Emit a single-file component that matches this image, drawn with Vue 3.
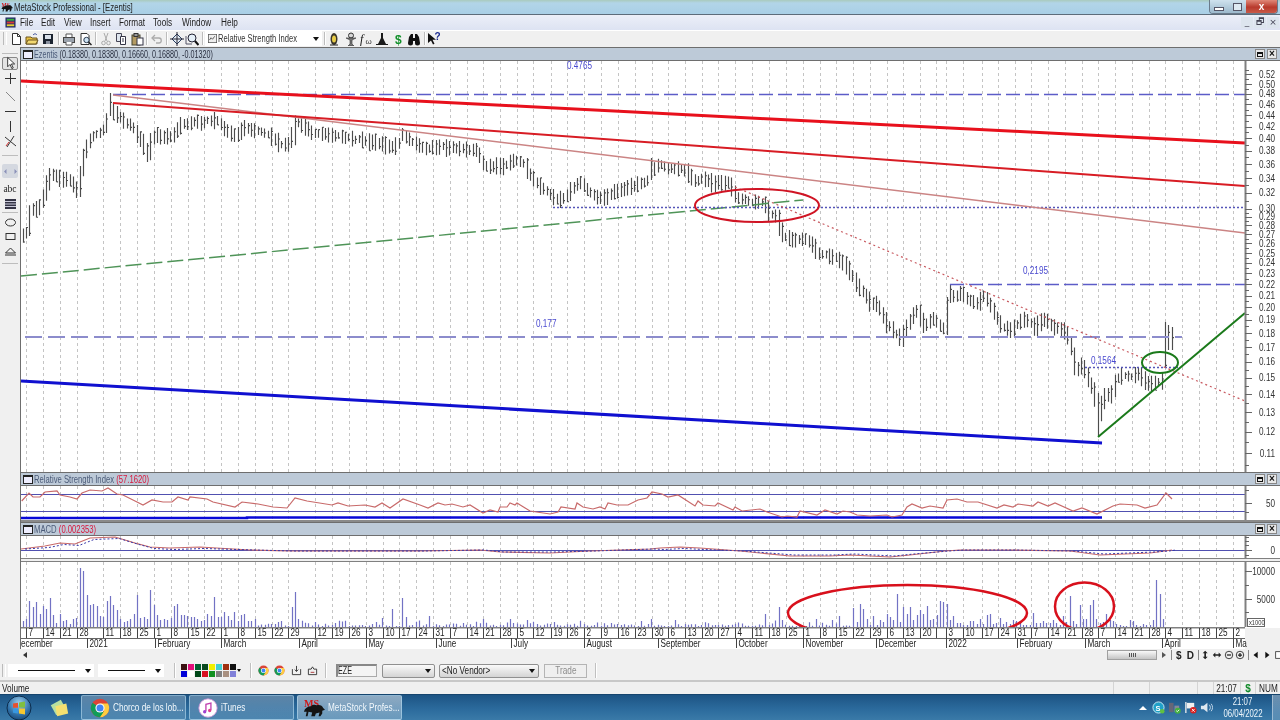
<script setup>
const rng = (() => { let s = 12345; return () => (s = (s * 16807) % 2147483647) / 2147483647 })()

const interp = (pts, x) => {
  if (x <= pts[0][0]) return pts[0][1]
  for (let i = 1; i < pts.length; i++) {
    if (x <= pts[i][0]) {
      const [a, b] = pts[i - 1], [c, d] = pts[i]
      return b + ((d - b) * (x - a)) / (c - a)
    }
  }
  return pts[pts.length - 1][1]
}
const line = pts => 'M' + pts.map(p => p[0] + ' ' + p[1]).join('L')

/* ---- weekly ticks and their labels ---- */
const weekLabels = [
  [26,7],[43,14],[60,21],[76.5,28],[103,11],[120,18],[137,25],[154,1],[171,8],[188,15],[204,22],[221,1],[238,8],[255,15],[272,22],[288,29],
  [315,12],[332,19],[349,26],[366,3],[383,10],[399,17],[416,24],[433,31],[450,7],[467,14],[483,21],[500,28],[517,5],[533,12],[551,19],[567,26],
  [584,2],[601,9],[618,16],[635,23],[652,30],[668,6],[685,13],[702,20],[718,27],[735,4],[752,11],[769,18],[786,25],[803,1],[820,8],[836,15],
  [853,22],[870,29],[887,6],[903,13],[920,20],[936,''],[946,3],[963,10],[982,17],[998,24],[1015,31],[1031,7],[1048,14],[1065,21],[1082,28],
  [1098,7],[1115,14],[1132,21],[1149,28],[1165,4],[1182,11],[1199,18],[1216,25],[1233,2]
].map(([x, t]) => ({ x: Math.round(x) + 0.5, t }))
const gridPath = top => bottom => weekLabels.map(w => `M${w.x} ${top}V${bottom}`).join('')
const months = [
  [5,'ecember',true],[87,'2021'],[154.5,'February'],[221,'March'],[299,'April'],[366,'May'],[436,'June'],[511,'July'],[584,'August'],[658,'September'],
  [736,'October'],[803,'November'],[876,'December'],[946,'2022'],[1017,'February'],[1085,'March'],[1162,'April'],[1233,'Ma']
].map(([x, t, cut]) => ({ x: Math.round(x) + 0.5, t, cut }))

/* ---- price path, traced in screen pixels ---- */
const price = [[22,238],[27,230],[30,203],[37,213],[43,193],[50,172],[58,177],[67,180],[77,193],[80,167],[88,137],[100,132],[103,128],[110,108],[117,117],[130,127],[142,145],[147,152],[152,133],[158,138],[170,137],[180,123],[200,123],[215,120],[233,137],[243,127],[267,133],[277,145],[290,145],[295,123],[313,133],[337,137],[360,140],[393,148],[403,135],[420,148],[440,147],[477,152],[483,167],[505,165],[513,159],[523,165],[533,182],[550,197],[557,202],[565,195],[578,180],[590,195],[600,198],[620,190],[640,182],[650,177],[652,165],[667,167],[683,168],[695,182],[700,178],[710,183],[727,183],[733,195],[747,202],[763,203],[768,215],[775,217],[780,235],[792,242],[803,238],[817,253],[832,258],[845,265],[853,280],[862,293],[870,305],[877,305],[885,323],[900,340],[907,323],[915,307],[922,325],[932,318],[945,332],[948,300],[952,292],[955,300],[960,293],[970,302],[978,303],[982,293],[993,313],[1000,328],[1010,330],[1022,320],[1035,328],[1042,318],[1053,328],[1065,332],[1070,347],[1075,375],[1080,362],[1087,380],[1095,400],[1098,415],[1105,393],[1110,400],[1113,378],[1127,377],[1138,375],[1147,383],[1162,382],[1166,343],[1168,337],[1172,338]]
const spikes = [[110,93,116],[147,143,162],[292,127,148],[403,128,141],[652,158,180],[947,297,335],[951,284,303],[1098,393,436],[1166,322,368],[1169,325,350],[1172,327,350]]
let prev = null
let barPath = ''
for (let x = 22.5; x <= 1172; x += 3.36) {
  const px = Math.round(x) + 0.5
  const y = interp(price, x) + (rng() - 0.5) * 4
  const r = 3 + rng() * 5
  let hi = Math.min(y, prev ?? y) - r
  let lo = Math.max(y, prev ?? y) + r
  const sp = spikes.find(s => Math.abs(s[0] - x) < 1.7)
  if (sp) { hi = sp[1]; lo = sp[2] }
  const c = hi + (lo - hi) * rng()
  barPath += `M${px} ${hi.toFixed(1)}V${lo.toFixed(1)}M${px} ${c.toFixed(1)}h1.5`
  prev = y
}

/* ---- price axis: logarithmic ---- */
const py = p => 94 + 243.8 * Math.log(0.48 / p)
const priceLabels = []
for (let i = 52; i >= 11; i -= i > 30 ? 2 : 1) priceLabels.push({ t: '0.' + i, y: py(i / 100) + 3.5 })
let priceMajor = '', priceMinor = ''
for (let i = 53; i >= 11; i--) {
  const y = Math.round(py(i / 100)) + 0.5
  if (i > 30 && i % 2) priceMinor += `M1245 ${y}h4`
  else priceMajor += `M1245 ${y}h7`
  if (i <= 30) priceMinor += `M1245 ${Math.round(py((i - 0.5) / 100)) + 0.5}h4`
}

/* ---- indicators ---- */
const rsi = line([[21.7,501],[29,493],[33,497],[40,497],[45,492],[57,491],[60,495],[70,497],[77,499],[82,493],[90,490],[102,491],[108,488],[117,494],[123,495],[137,502],[143,505],[152,500],[163,502],[172,502],[178,497],[188,500],[190,497],[207,499],[213,502],[235,507],[242,502],[258,504],[273,507],[287,508],[295,498],[307,501],[332,505],[338,503],[348,506],[365,505],[375,507],[382,503],[390,508],[403,499],[420,505],[428,508],[438,503],[445,505],[452,504],[463,507],[470,505],[483,513],[490,510],[498,512],[500,507],[507,507],[510,503],[515,505],[517,503],[530,511],[550,514],[558,512],[561,507],[575,509],[577,503],[583,507],[593,509],[600,507],[605,509],[608,503],[617,505],[628,505],[638,500],[647,498],[652,492],[662,494],[668,497],[678,495],[695,506],[698,501],[703,505],[715,506],[718,503],[733,510],[735,507],[742,511],[760,509],[767,512],[782,517],[787,516],[797,517],[800,511],[817,515],[825,510],[837,514],[843,511],[850,512],[857,515],[870,516],[887,515],[892,517],[902,515],[907,507],[912,504],[922,508],[930,506],[943,508],[947,500],[957,499],[967,502],[978,502],[997,508],[1004,505],[1013,507],[1018,504],[1033,506],[1038,502],[1048,506],[1055,503],[1073,511],[1082,508],[1097,514],[1113,506],[1120,504],[1137,505],[1145,508],[1157,505],[1166,493],[1172,499]])
const macdPts = [[21,549],[45,546],[60,543],[75,544],[90,538],[115,537],[135,543],[150,547],[170,548],[200,547],[250,550],[290,551],[330,551],[420,551],[480,550],[500,552],[550,553],[590,551],[650,549],[660,548],[680,547],[700,548],[740,551],[790,556],[830,556],[850,555],[890,557],[910,555],[945,551],[960,550],[1010,550],[1070,551],[1100,555],[1125,554],[1150,553],[1165,551],[1172,550]]
const macd = line(macdPts)
const macdSig = line(macdPts.map(([x, y]) => [x + 4, y + (y < 549 ? 1.5 : y > 552 ? -1 : 0)]))

/* ---- volume ---- */
const volA = [6,8,26,20,25,13,21,18,29,12,4,13,6,7,3,8,9,59,56,32,22,23,21,11,10,26,31,22,17,8,5,6,8,13,32,9,10,8,37,22,12,7,8,7,9,21,23,12,12,11,10,10,8,6,7,13,11,30,10,10,15,11,7,15,6,12,13,6,6,8]
const volBy = [19,5,23,18,8,2,11,2,7,5,13,10,7,33,5,20,13,20,7,12,17,13,21,7,8,12,26,25,23,7,11,4,4,2,2,6,6,3,8,3,12,13,3,4,9,3,5,3,7,6,6,2,2,2,14,4,4,6,4,4,7,4,2,11,5,31,6,3,22,8,8,22,27,8,4,5,13,7,6,3,2,1,1,7,6,2,1,3,2,2,7,47,33,8]
const volMid = { 292: 20, 295: 35, 298: 8, 382: 9, 393: 18, 403: 29, 406: 10, 429: 11, 483: 8, 510: 8, 527: 7, 652: 8, 675: 7, 766: 13, 779: 20, 783: 7, 817: 8, 840: 11, 833: 7 }
let volPath = ''
volA.forEach((h, i) => { const x = Math.round(22.7 + i * 3.36) + 0.5; volPath += `M${x} 627v${-h}` })
for (let x = 22.7 + 70 * 3.36; x < 853; x += 3.36) {
  const k = Math.round(x)
  const hit = Object.keys(volMid).find(m => Math.abs(m - k) < 2)
  const h = hit ? volMid[hit] : 1 + rng() * rng() * 6
  volPath += `M${k + 0.5} 627v${(-h).toFixed(1)}`
}
volBy.forEach((h, i) => { const x = Math.round(853.3 + i * 3.33) + 0.5; volPath += `M${x} 627v${-h}` })

/* ---- toolbars ---- */
const page = 'fill="#fff" stroke="#333"'
const mainTools = [
  { w: 16, svg: `<path d="M3.5 1.5h5l3 3v8h-8z" ${page}/><path d="M8.5 1.5v3h3" fill="none" stroke="#333"/>` },
  { w: 16, svg: `<path d="M1 5h5l1 1h5v6H1z" fill="#e8c040" stroke="#6a5420"/><path d="M3 8h10l-2 4H1z" fill="#f2d870" stroke="#6a5420"/><path d="M8 3c2-2 3-1 4 0" fill="none" stroke="#2a3f90"/>` },
  { w: 16, svg: `<rect x="2" y="2" width="10" height="10" fill="#1c2430"/><rect x="4" y="3" width="6" height="4" fill="#d8dfe8"/><rect x="5" y="9" width="4" height="3" fill="#8a92a0"/>` },
  { sep: 1 },
  { w: 15, svg: `<path d="M4 5V2h6v3" fill="#fff" stroke="#555"/><rect x="1.5" y="5.5" width="11" height="5" fill="#9aa2ac" stroke="#444"/><path d="M4 10v3h6v-3" fill="#fff" stroke="#555"/>` },
  { w: 17, svg: `<path d="M3 1.5h6l2 2v9H3z" ${page}/><circle cx="8.5" cy="8" r="2.7" fill="#cfe4f4" stroke="#2a3a50"/><path d="M10.5 10l3 3" stroke="#222" stroke-width="1.5"/>` },
  { sep: 1 },
  { w: 15, svg: `<path d="M5 1l3 8M9 1L6 9" stroke="#aaa" fill="none"/><circle cx="4.5" cy="11" r="1.8" fill="none" stroke="#aaa"/><circle cx="9.5" cy="11" r="1.8" fill="none" stroke="#aaa"/>` },
  { w: 16, svg: `<path d="M2.5 1.5h5v8h-5z" fill="#dfe6ee" stroke="#445"/><path d="M6.5 4.5h5v8h-5z" fill="#fff" stroke="#334"/><path d="M8 7h2M8 9h2" stroke="#334"/>` },
  { w: 15, svg: `<rect x="2" y="3" width="8" height="10" fill="#b39a62" stroke="#443"/><rect x="4" y="1.5" width="4" height="3" fill="#999" stroke="#333"/><rect x="7" y="6" width="6" height="7" fill="#fff" stroke="#334"/>` },
  { sep: 1 },
  { w: 15, svg: `<path d="M3 6h6c3 0 3 5 0 5H6" fill="none" stroke="#aaa" stroke-width="1.3"/><path d="M5 3L2 6l3 3" fill="none" stroke="#aaa" stroke-width="1.3"/>` },
  { sep: 1 },
  { w: 15, svg: `<path d="M7 2l5 5-5 5-5-5z" fill="#e6eef6" stroke="#2a3f60"/><path d="M7 0v14M0 7h14" stroke="#223" stroke-width="1"/>` },
  { w: 16, svg: `<path d="M1 12V4M1 12h6" stroke="#556" fill="none"/><circle cx="7" cy="6" r="4" fill="#e6f0f8" stroke="#223"/><path d="M10 9l3.5 4" stroke="#111" stroke-width="2"/>` },
  { sep: 1 },
  { combo: 1 },
  { sep: 1 },
  { w: 14, svg: `<ellipse cx="7" cy="7" rx="3.5" ry="6" fill="#39342a"/><ellipse cx="7" cy="7" rx="2" ry="3.6" fill="#e8cc48"/><path d="M3 13h8" stroke="#222"/>` },
  { w: 17, svg: `<circle cx="8" cy="3.5" r="2.5" fill="#d8d8d8" stroke="#333"/><path d="M3 6h10L9 8v4l2 2H5l2-2V8z" fill="#777" stroke="#333" stroke-width=".6"/>` },
  { w: 16, svg: `<text x="1" y="11" class="fx">f</text><text x="6.5" y="12" class="fxs">ω</text>` },
  { w: 16, svg: `<path d="M6 1h2v5l3 6h2v1H1v-1h2l3-6z" fill="#1a1a1a"/>` },
  { w: 16, svg: `<text x="4" y="12" class="dollar">$</text>` },
  { w: 16, svg: `<path d="M2 5l2-3h2v4h2V2h2l2 3 1 6a2.5 2.5 0 0 1-5 0V9H6v2a2.5 2.5 0 0 1-5 0z" fill="#111"/>` },
  { sep: 1 },
  { w: 14, svg: `<path d="M1 1v10l3-2.5 2 4 1.5-.7-2-4H9z" fill="#111"/><text x="7.5" y="8" class="qm">?</text>` }
]
const toolbox = [
  { sep: 8 },
  { h: 13, cls: 'pressed', svg: `<path d="M5 1v10l2.5-2.5L9.5 13l1.5-.7-2-4.3h3.5z" fill="#fff" stroke="#333"/>` },
  { h: 17, svg: `<path d="M7.5 2v11M2 7.5h11" stroke="#333" fill="none"/>` },
  { h: 19, svg: `<path d="M3 3l9 9" stroke="#888" fill="none"/>` },
  { h: 10, svg: `<path d="M2 7.5h11" stroke="#333" fill="none"/>` },
  { h: 20, svg: `<path d="M7.5 2v11" stroke="#333" fill="none"/>` },
  { h: 10, svg: `<path d="M2 3l11 9M11 2L4 13" stroke="#333" fill="none"/><path d="M3 12l3-4" stroke="#c33"/>` },
  { sep: 18 },
  { h: 14, cls: 'pair', svg: `<path d="M3.5 5v5L1 7.5zM11.5 5v5L14 7.5z" fill="#8a90b8"/>` },
  { h: 2 },
  { h: 18, txt: 'abc' },
  { h: 10, svg: `<rect x="2" y="3" width="11" height="10" fill="#334"/><path d="M2 5.5h11M2 8h11M2 10.500h11" stroke="#ccd"/>` },
  { sep: 8 },
  { h: 12, svg: `<ellipse cx="7.5" cy="7.500" rx="5" ry="3.5" fill="none" stroke="#333"/>` },
  { h: 16, svg: `<rect x="3" y="4.500" width="9" height="6" fill="none" stroke="#333"/>` },
  { h: 14, svg: `<path d="M7.500 4l5 5h-10z" fill="none" stroke="#333"/><path d="M2 11h11" stroke="#333"/>` },
  { sep: 10 }
]
const palette = ['#3a1010','#e0107a','#006030','#0a4a20','#f0f000','#40d0d0','#a03010','#101010','#0000d8','#ffffff','#004818','#d81020','#109020','#808080','#a89080','#8080d8']
const endTools = [
  { sep: 1 }, { t: '$', c: 'bold' }, { t: 'D', c: 'bold' }, { sep: 1 },
  { svg: `<path d="M5 1l3 3H2zM5 11l3-3H2z M4 4h2v4H4z" fill="#222"/>` },
  { svg: `<path d="M1 5l3-3v6zM11 5L8 2v6zM4 4h4v2H4z" fill="#222" transform="translate(0 1)"/>` },
  { svg: `<circle cx="6" cy="6" r="4.500" fill="none" stroke="#222"/><path d="M3.500 6h5" stroke="#222" stroke-width="1.500"/>` },
  { svg: `<circle cx="6" cy="6" r="4.500" fill="none" stroke="#222"/><path d="M3.500 6h5M6 3.500v5" stroke="#222" stroke-width="1.500"/>` },
  { sep: 1 },
  { svg: `<path d="M3 6l5-4v8z" fill="#111"/>` },
  { svg: `<path d="M9 6L4 2v8z" fill="#111"/>` },
  { svg: `<rect x="2" y="2" width="8" height="8" fill="#fff" stroke="#333"/>` }
]
</script>

<template>
  <div class="app">
    <header class="title">
      <svg class="msmini" viewBox="0 0 24 24"><use href="#ms-logo" /></svg>
      <span class="title-text nw">MetaStock Professional - [Ezentis]</span>
      <div class="caption">
        <span class="cap cap-min"><i class="cap-dash"></i></span>
        <span class="cap cap-max"><i class="cap-box"></i></span>
        <span class="cap cap-close">x</span>
      </div>
    </header>

    <nav class="menu">
      <svg class="appicon" viewBox="0 0 12 12">
        <rect x="0.500" y="0.500" width="11" height="11" fill="#26306a" />
        <rect x="2" y="2" width="8" height="2" fill="#38b040" />
        <rect x="2" y="5" width="8" height="2" fill="#d83838" />
        <rect x="2" y="8" width="8" height="2" fill="#e8d030" />
      </svg>
      <span class="mi nw">File</span><span class="mi nw">Edit</span><span class="mi nw">View</span><span class="mi nw">Insert</span><span class="mi nw">Format</span><span class="mi nw">Tools</span><span class="mi nw">Window</span><span class="mi nw">Help</span>
      <div class="mdi">
        <span class="mdi-b">_</span><span class="mdi-b">🗗</span><span class="mdi-b">×</span>
      </div>
    </nav>

    <section class="tools">
      <span class="grip"></span>
      <template v-for="(t, i) in mainTools" :key="i">
        <span v-if="t.sep" class="tsep"></span>
        <span v-else-if="t.combo" class="study">
          <svg class="study-ic" viewBox="0 0 12 12"><rect x="0.500" y="0.500" width="11" height="11" fill="#eee" stroke="#555"/><path d="M2 8l2-3 2 2 3-4" fill="none" stroke="#333"/></svg>
          <span class="study-t nw">Relative Strength Index</span>
          <i class="arrow"></i>
        </span>
        <span v-else class="titem" :style="{ width: t.w + 'px' }"><svg viewBox="0 0 14 14" width="14" height="14" v-html="t.svg"></svg></span>
      </template>
    </section>

    <main class="work">
      <aside class="box">
        <template v-for="(b, i) in toolbox" :key="i">
          <span v-if="b.sep" class="bsep" :style="{ height: b.sep + 'px' }"></span>
          <span v-else class="bitem" :class="b.cls" :style="{ height: b.h + 'px' }">
            <span v-if="b.txt" class="abc">{{ b.txt }}</span>
            <svg v-else-if="b.svg" viewBox="0 0 15 15" width="15" height="15" v-html="b.svg"></svg>
          </span>
        </template>
      </aside>

      <div class="chartcol">
        <div class="panes">
          <div class="ptitle">
            <i class="win-ic"></i>
            <span class="nw pt-main"><span class="pname">Ezentis </span><span class="pvals">(0.18380, 0.18380, 0.16660, 0.16880, -0.01320)</span></span>
            <span class="pbtns"><i class="pb"><i class="pb-box"></i></i><i class="pb pb-x">×</i></span>
          </div>

          <svg class="pane pane-main" viewBox="21 61 1259 411">
            <path :d="gridPath(61)(472)" class="grid" />
            <path :d="barPath" class="bars" />
            <path d="M21 276L803 200" class="l-greendash" />
            <path d="M553 207.500H1245" class="l-dots" />
            <path d="M1085 367.500H1178" class="l-dots" />
            <path d="M25 337H1182" class="l-dashlight" />
            <path d="M113 94.500H1245" class="l-dash" />
            <path d="M950 284.500H1245" class="l-dash" />
            <path d="M113 95L1245 233" class="l-thin" />
            <path d="M113 103L1245 186" class="l-mid" />
            <path d="M21 81L1245 143" class="l-thick" />
            <path d="M735 187L1245 401" class="l-reddots" />
            <path d="M21 381L1102 443" class="l-blue" />
            <path d="M1098 437L1245 313" class="l-green" />
            <ellipse cx="757" cy="205.500" rx="62" ry="16.500" class="o-red" />
            <ellipse cx="1160" cy="362.500" rx="18" ry="10.500" class="o-green" />
            <text x="567" y="69" class="note">0.4765</text>
            <text x="1023" y="274" class="note">0,2195</text>
            <text x="536" y="327" class="note">0,177</text>
            <text x="1091" y="364" class="note">0,1564</text>
            <rect x="1246" y="61" width="34" height="411" fill="#fff" />
            <path d="M1245.500 61V472" class="axis" />
            <path :d="priceMajor" class="axtick" />
            <path :d="priceMinor" class="axtick" />
            <text v-for="l in priceLabels" :key="l.t" x="1275" :y="l.y" class="ylab">{{ l.t }}</text>
          </svg>

          <div class="ptitle">
            <i class="win-ic"></i>
            <span class="nw pt"><span class="pname">Relative Strength Index </span><span class="pred">(57.1620)</span></span>
            <span class="pbtns"><i class="pb"><i class="pb-box"></i></i><i class="pb pb-x">×</i></span>
          </div>
          <svg class="pane pane-rsi" viewBox="21 486 1259 34">
            <path :d="gridPath(486)(520)" class="grid" />
            <path d="M21 494.500H1245M21 511.500H1245" class="ref" />
            <path d="M21 518H247V517.500H1102" class="rsiblue" />
            <path :d="rsi" class="ind" />
            <rect x="1246" y="486" width="34" height="34" fill="#fff" />
            <path d="M1245.500 486V520" class="axis" />
            <path d="M1245 490.500h4M1245 503.500h7M1245 512.500h4" class="axtick" />
            <text x="1275" y="507" class="ylab">50</text>
          </svg>
          <div class="psep"></div>

          <div class="ptitle">
            <i class="win-ic"></i>
            <span class="nw pt"><span class="pname">MACD </span><span class="pred">(0.002353)</span></span>
            <span class="pbtns"><i class="pb"><i class="pb-box"></i></i><i class="pb pb-x">×</i></span>
          </div>
          <svg class="pane pane-macd" viewBox="21 536 1259 22">
            <path :d="gridPath(536)(558)" class="grid" />
            <path d="M21 550.500H1245" class="ref" />
            <path :d="macd" class="ind" />
            <path :d="macdSig" class="sig" />
            <rect x="1246" y="536" width="34" height="22" fill="#fff" />
            <path d="M1245.500 536V558" class="axis" />
            <path d="M1245 537.500h4M1245 541.500h4M1245 545.500h4M1245 550.500h7M1245 555.500h4" class="axtick" />
            <text x="1275" y="554.500" class="ylab">0</text>
          </svg>
          <div class="pgap"></div>

          <svg class="pane pane-vol" viewBox="21 562 1259 65">
            <path :d="gridPath(562)(627)" class="grid" />
            <path :d="volPath" class="vol" />
            <ellipse cx="907.500" cy="613" rx="119.500" ry="28" class="o-vol" />
            <ellipse cx="1084.500" cy="606.500" rx="29.500" ry="24" class="o-vol" />
            <rect x="1246" y="562" width="34" height="65" fill="#fff" />
            <path d="M1245.500 562V627" class="axis" />
            <path d="M1245 571.500h7M1245 599.500h7M1245 585.500h4M1245 612.500h4" class="axtick" />
            <text x="1275" y="575.500" class="ylab">10000</text>
            <text x="1275" y="603" class="ylab">5000</text>
            <rect x="1247.500" y="618.500" width="17" height="8" class="kbox" />
            <text x="1249" y="625" class="ktext">x1000</text>
          </svg>

          <svg class="pane pane-dates" viewBox="21 627 1259 22">
            <rect x="21" y="627" width="1224" height="22" fill="#fff" />
            <rect x="1245" y="628" width="35" height="21" fill="#f0f0f0" />
            <path d="M21 627.500H1245" class="dateline" />
            <path d="M21 638.500H1245" class="dateline2" />
            <path :d="weekLabels.map(w => `M${w.x} 628V638`).join('')" class="dticks" />
            <path :d="months.filter(m => !m.cut).map(m => `M${m.x} 638V648`).join('')" class="dticks" />
            <template v-for="w in weekLabels" :key="w.x">
              <text v-if="w.t !== ''" :x="w.x + 2" y="636" class="dtext">{{ w.t }}</text>
            </template>
            <text v-for="m in months" :key="m.t + m.x" :x="m.cut ? 21 : m.x + 2" y="647" class="dtext">{{ m.t }}</text>
          </svg>
        </div>

        <div class="scroll">
          <span class="sl"></span>
          <span class="thumb"><i class="thumb-g"></i></span>
          <span class="sr"></span>
          <template v-for="(e, i) in endTools" :key="i">
            <span v-if="e.sep" class="esep"></span>
            <span v-else-if="e.t" class="eitem etxt">{{ e.t }}</span>
            <span v-else class="eitem"><svg viewBox="0 0 12 12" width="10" height="10" v-html="e.svg"></svg></span>
          </template>
        </div>
      </div>
    </main>

    <section class="bottom">
      <span class="grip small"></span>
      <span class="lc lc1"><i class="lcline"></i><i class="arrow"></i></span>
      <span class="lc lc2"><i class="lcline"></i><i class="arrow"></i></span>
      <span class="bsepv"></span>
      <span class="colors"><i v-for="(c, i) in palette" :key="i" class="sw" :style="{ background: c }"></i></span>
      <i class="arrow tiny"></i>
      <span class="bsepv b2"></span>
      <svg class="chr c1" viewBox="0 0 24 24"><use href="#chrome" /></svg>
      <svg class="chr c2" viewBox="0 0 24 24"><use href="#chrome" /></svg>
      <svg class="doc d1" viewBox="0 0 12 12"><path d="M1.500 4.500v6h9v-6M6 1v6M4 5l2 2 2-2" fill="none" stroke="#333"/></svg>
      <svg class="doc d2" viewBox="0 0 12 12"><path d="M1.500 4.500v6h9v-6h-3L6 2 4.500 4.500z" fill="none" stroke="#333"/><path d="M4 8h4" stroke="#a33"/></svg>
      <span class="bsepv b3"></span>
      <span class="eze"><span class="nw eze-t">EZE</span></span>
      <span class="dd dd1"><i class="arrow"></i></span>
      <span class="dd dd2"><span class="nw dd-t">&lt;No Vendor&gt;</span><i class="arrow"></i></span>
      <span class="trade"><span class="nw trade-t">Trade</span></span>
      <span class="bsepv b4"></span>
    </section>

    <footer class="status">
      <span class="st-main"><span class="nw">Volume</span></span>
      <span class="st-cell c-a"></span>
      <span class="st-cell c-a2"></span>
      <span class="st-cell c-a3"></span>
      <span class="st-cell c-b"><span class="nw ctr">21:07</span></span>
      <span class="st-cell c-c">$</span>
      <span class="st-cell c-d"><span class="nw ctr">NUM</span></span>
    </footer>

    <div class="taskbar">
      <svg class="orb" viewBox="0 0 26 26">
        <defs>
          <radialGradient id="orbg" cx=".5" cy=".3" r=".8"><stop offset="0" stop-color="#9fd0ee"/><stop offset=".6" stop-color="#2f70a8"/><stop offset="1" stop-color="#153d66"/></radialGradient>
        </defs>
        <circle cx="13" cy="13" r="12" fill="url(#orbg)" stroke="#0c2c4c"/>
        <path d="M7 8.500l5-.8v5H7z" fill="#e85030"/><path d="M13 7.500l6-1v6h-6z" fill="#80c040"/>
        <path d="M7 13.500h5v5l-5-.8z" fill="#3898e0"/><path d="M13 13.500h6v6l-6-1z" fill="#f8c830"/>
      </svg>
      <svg class="gadget" viewBox="0 0 24 24">
        <path d="M3 9l11-6 6 11-11 6z" fill="#b8e0a0"/><path d="M8 10l12-3 2 11-12 3z" fill="#f4e070"/>
      </svg>
      <span class="tb">
        <svg class="tb-ic" viewBox="0 0 24 24"><use href="#chrome" /></svg>
        <span class="tb-t nw">Chorco de los lob...</span>
      </span>
      <span class="tb tb2">
        <svg class="tb-ic" viewBox="0 0 24 24">
          <circle cx="12" cy="12" r="11" fill="#fff" stroke="#d090d8"/>
          <path d="M9.500 16V7.500l6-1.500v8.500" fill="none" stroke="#c040b0" stroke-width="1.600"/>
          <circle cx="8" cy="16.500" r="2" fill="#a040d0"/><circle cx="14" cy="15" r="2" fill="#e04090"/>
        </svg>
        <span class="tb-t nw">iTunes</span>
      </span>
      <span class="tb tb3">
        <svg class="tb-ms" viewBox="0 0 24 24"><use href="#ms-logo" /></svg>
        <span class="tb-t nw">MetaStock Profes...</span>
      </span>
      <div class="tray">
        <svg class="tr-ic up" viewBox="0 0 8 8"><path d="M0 6l4-4 4 4z" fill="#fff"/></svg>
        <svg class="tr-ic" viewBox="0 0 14 14"><circle cx="7" cy="7" r="6" fill="#20a0c8" stroke="#cfeff8"/><text x="3.800" y="10.500" class="tray-s">S</text><circle cx="11" cy="11" r="2.500" fill="#60c040"/></svg>
        <svg class="tr-ic" viewBox="0 0 14 14"><rect x="1" y="2" width="5" height="10" fill="#667"/><rect x="7" y="5" width="5" height="7" fill="#889"/><circle cx="10.500" cy="10.500" r="3.200" fill="#44b040"/><path d="M9 10.500l1 1 2-2" stroke="#fff" fill="none"/></svg>
        <svg class="tr-ic" viewBox="0 0 14 14"><path d="M2 1v12" stroke="#eee" stroke-width="1.400"/><path d="M3 2h8v6H3z" fill="#f0f0f0"/><circle cx="10" cy="10" r="3.500" fill="#d82020"/><path d="M8.500 8.500l3 3M11.500 8.500l-3 3" stroke="#fff"/></svg>
        <svg class="tr-ic" viewBox="0 0 14 14"><path d="M1 5h3l4-3v10l-4-3H1z" fill="#dfe8f0"/><path d="M10 4c1.500 2 1.500 4 0 6M12 3c2 2.500 2 5.500 0 8" fill="none" stroke="#cde"/></svg>
        <span class="clock"><span class="clock-t">21:07</span><span class="clock-t">06/04/2022</span></span>
        <span class="desk"></span>
      </div>
    </div>

    <svg class="defs" width="0" height="0">
      <defs>
        <g id="chrome">
          <circle cx="12" cy="12" r="11" fill="#db4437"/>
          <path d="M12 12L2.500 17.500A11 11 0 0 1 3 5.800z" fill="#0f9d58"/>
          <path d="M2.500 17.500A11 11 0 0 0 12 23l5-5.500L12 12z" fill="#0f9d58"/>
          <path d="M12 23A11 11 0 0 0 23 12c0-2-.5-3.500-1.500-5.500H12l5 9z" fill="#ffcd40"/>
          <circle cx="12" cy="12" r="5.500" fill="#fff"/>
          <circle cx="12" cy="12" r="4.200" fill="#4285f4"/>
        </g>
        <g id="ms-logo">
          <text x="1" y="11" class="mstext">MS</text>
          <path d="M1 16c1-4 4-6 8-6 1-2 4-2 6-1 3-1 6 0 7 3l2 2-3 1v3l-2 3h-2l1-4-4 1-1 3H9l1-4-4-1-1 5H3l1-5z" fill="#141414"/>
        </g>
      </defs>
    </svg>
  </div>
</template>

<style>
html, body { margin: 0; background: #f0f0f0; }
.fx { font: italic 12px "Liberation Serif", serif; fill: #111; }
.fxs { font: 8px "Liberation Sans", sans-serif; fill: #333; }
.dollar { font: bold 12px "Liberation Sans", sans-serif; fill: #12902a; }
.qm { font: bold 10px "Liberation Sans", sans-serif; fill: #1a2a90; }
.mstext { font: bold 11px "Liberation Serif", serif; fill: #d01818; }
.tray-s { font: bold 8px "Liberation Sans", sans-serif; fill: #fff; }
</style>

<style scoped>
.app {
  width: 1280px; height: 720px; overflow: hidden; position: relative;
  display: flex; flex-direction: column; background: #f0f0f0;
  font: 10px "Liberation Sans", Arial, sans-serif; color: #222;
  filter: blur(0.3px);
}
i { display: block; font-style: normal; }
/* the screen this was captured from was squeezed horizontally, so its type reads condensed */
.nw { display: inline-block; white-space: pre; transform: scaleX(.82); transform-origin: left center; }
.nw.ctr { transform-origin: center; }
.nw.pt-main { transform: scaleX(.72); }
.nw.pt { transform: scaleX(.77); }

.title {
  height: 14px; flex: none; display: flex; align-items: center; box-sizing: content-box;
  background: linear-gradient(#a9cabd 0, #b2d5e8 3px, #a9cfe6 100%); border-bottom: 1px solid #5d6c7a;
}
.msmini { width: 12px; height: 12px; margin-left: 1px; flex: none; }
.nw.title-text { margin-left: 1px; font-size: 10px; color: #222; transform: scaleX(.78); }
.caption { margin-left: auto; margin-right: 2px; height: 13px; align-self: flex-start; display: flex; border: 1px solid #6a7a8a; border-top: 0; border-radius: 0 0 4px 4px; overflow: hidden; }
.cap { display: flex; align-items: center; justify-content: center; width: 18px; background: linear-gradient(#cfe2ee, #9cb9cc); }
.cap-close { width: 31px; background: linear-gradient(#e08878, #b83a2c 55%, #c85a48); color: #fff; font: bold 10px "Liberation Sans", sans-serif; }
.cap-dash { width: 8px; height: 2px; background: #fff; border: 1px solid #556; margin-top: 4px; }
.cap-box { width: 7px; height: 6px; border: 1px solid #556; background: #dfeaf2; }

.menu {
  height: 15px; flex: none; display: flex; align-items: center; position: relative;
  background: linear-gradient(#eceff8, #dde3f2);
}
.appicon { width: 11px; height: 11px; margin-left: 5px; margin-right: 4px; flex: none; }
.mi { font-size: 10px; color: #222; flex: none; }
.mi:nth-of-type(1) { width: 21px; }
.mi:nth-of-type(2) { width: 23px; }
.mi:nth-of-type(3) { width: 26px; }
.mi:nth-of-type(4) { width: 29px; }
.mi:nth-of-type(5) { width: 34px; }
.mi:nth-of-type(6) { width: 29px; }
.mi:nth-of-type(7) { width: 39px; }
.mdi { margin-left: auto; display: flex; margin-right: 1px; }
.mdi-b { width: 12px; height: 11px; margin-left: 1px; background: #dde5ee; border: 0; color: #445; font: 9px/11px "DejaVu Sans", sans-serif; text-align: center; }

.tools {
  height: 17px; flex: none; display: flex; align-items: center; background: #f0f0f0; box-sizing: border-box; border-top: 1px solid #fff; padding-bottom: 1px;
}
.grip { width: 2px; height: 13px; margin-left: 3px; margin-right: 1px; border-left: 1px solid #bbb; border-right: 1px solid #fff; box-sizing: content-box; }
.grip.small { margin-left: 3px; margin-right: 3px; }
.titem { display: flex; justify-content: center; align-items: center; flex: none; }
.tsep { width: 1px; height: 13px; background: #bcbcbc; margin: 0 1.500px; flex: none; border-right: 1px solid #fff; }
.study { width: 117px; height: 15px; background: #fff; display: flex; align-items: center; flex: none; }
.study-ic { width: 9px; height: 9px; margin-left: 3px; flex: none; }
.nw.study-t { margin-left: 1px; width: 90px; color: #333; font-size: 10px; flex: none; transform: scaleX(.76); }
.arrow { width: 0; height: 0; margin-left: auto; margin-right: 3px; border: 3px solid transparent; border-top: 4px solid #111; border-bottom: 0; flex: none; }

.work { height: 614px; flex: none; display: flex; background: #f0f0f0; }
.box { width: 20px; flex: none; display: flex; flex-direction: column; padding-top: 2px; box-sizing: border-box; }
.bitem { display: flex; align-items: center; justify-content: center; margin: 0 2px; flex: none; }
.pressed { border: 1px solid #888; border-radius: 2px; background: #e4e4e4; box-sizing: border-box; }
.pair { background: #d4d8e0; border-radius: 2px; }
.bsep { display: flex; flex: none; align-items: center; position: relative; }
.bsep::after { content: ""; width: 16px; margin-left: 2px; height: 1px; background: #bdbdbd; }
.abc { font: 9.500px "Liberation Serif", serif; color: #222; }

.chartcol { flex: 1; min-width: 0; display: flex; flex-direction: column; }
.panes { border-left: 1px solid #6e6e6e; margin-left: 0; height: 602px; box-sizing: border-box; display: flex; flex-direction: column; }
.ptitle {
  height: 14px; flex: none; box-sizing: border-box; display: flex; align-items: center;
  background: #bdcad8; border-top: 1px solid #6e6e6e; border-bottom: 1px solid #6e6e6e;
}
.win-ic { width: 8px; height: 6px; margin-left: 2px; margin-right: 1px; border: 1px solid #222; border-top-width: 2px; background: #eef; box-sizing: content-box; flex: none; }
.pname { color: #4a5a78; }
.pvals { color: #2a3040; }
.pred { color: #d8143a; }
.pbtns { margin-left: auto; margin-right: 3px; display: flex; gap: 2px; }
.pb { width: 10px; height: 10px; box-sizing: border-box; background: #e8e8e8; border: 1px solid #888; display: flex; align-items: center; justify-content: center; font: bold 10px/8px "Liberation Sans", sans-serif; color: #111; }
.pb-box { width: 6px; height: 5px; border: 1px solid #111; border-top-width: 2px; box-sizing: border-box; }

.pane { display: block; background: #fff; flex: none; width: 1259px; }
.pane-main { height: 411px; }
.pane-rsi { height: 34px; }
.pane-macd { height: 22px; }
.pane-vol { height: 65px; }
.pane-dates { height: 22px; }
.psep { height: 2px; flex: none; background: #8a8a8a; }
.pgap { height: 4px; flex: none; box-sizing: border-box; background: #f0f0f0; border-top: 1px solid #808080; border-bottom: 1px solid #808080; }

.grid { stroke: #c4c4c4; stroke-width: 1; stroke-dasharray: 3 3; fill: none; }
.bars { stroke: #4c4c4c; stroke-width: 1.150; fill: none; }
.axis { stroke: #808080; stroke-width: 2; fill: none; }
.axtick { stroke: #666; stroke-width: 1; fill: none; }
.ylab { font-size: 10px; fill: #333; text-anchor: end; transform-box: fill-box; transform-origin: right center; transform: scaleX(.82); }
.note { font-size: 10px; fill: #4a4ad0; transform-box: fill-box; transform-origin: left center; transform: scaleX(.82); }
.l-thick { stroke: #e8101c; stroke-width: 3; fill: none; }
.l-mid { stroke: #d81c24; stroke-width: 2; fill: none; }
.l-thin { stroke: #cb8484; stroke-width: 1.500; fill: none; }
.l-dash { stroke: #5c5cc8; stroke-width: 1.500; stroke-dasharray: 14 5; fill: none; }
.l-dashlight { stroke: #8c8ccc; stroke-width: 2; stroke-dasharray: 17 6; fill: none; }
.l-greendash { stroke: #4f9458; stroke-width: 1.500; stroke-dasharray: 16 5; fill: none; }
.l-dots { stroke: #5555b8; stroke-width: 1.500; stroke-dasharray: 2 2; fill: none; }
.l-reddots { stroke: #c85a60; stroke-width: 1.200; stroke-dasharray: 2 3; fill: none; }
.l-blue { stroke: #1010d0; stroke-width: 3; fill: none; }
.l-green { stroke: #1b7a1b; stroke-width: 2; fill: none; }
.o-red { stroke: #d01424; stroke-width: 2; fill: none; }
.o-green { stroke: #1b7a1b; stroke-width: 2; fill: none; }
.o-vol { stroke: #d8101c; stroke-width: 2.500; fill: none; }
.ref { stroke: #5050b0; stroke-width: 1; fill: none; }
.rsiblue { stroke: #0808d8; stroke-width: 2.500; fill: none; }
.ind { stroke: #c86a6a; stroke-width: 1.200; fill: none; }
.sig { stroke: #3838a8; stroke-width: 1; stroke-dasharray: 2 2; fill: none; }
.vol { stroke: #7272c4; stroke-width: 1.200; fill: none; }
.kbox { fill: #fff; stroke: #666; stroke-width: 1; }
.ktext { font-size: 7px; fill: #333; transform-box: fill-box; transform-origin: left center; transform: scaleX(.82); }
.dateline { stroke: #808080; stroke-width: 2; fill: none; }
.dateline2 { stroke: #666; stroke-width: 1; fill: none; }
.dticks { stroke: #444; stroke-width: 1; fill: none; }
.dtext { font-size: 10px; fill: #222; transform-box: fill-box; transform-origin: left center; transform: scaleX(.82); }

.scroll { height: 12px; flex: none; display: flex; align-items: center; padding-left: 1px; }
.sl { width: 0; height: 0; margin-left: 2px; border: 3px solid transparent; border-right: 4px solid #333; border-left: 0; }
.thumb { width: 50px; height: 10px; margin-left: 1080px; background: linear-gradient(#f8f8f8, #c4c4c4); border: 1px solid #a0a0a0; box-sizing: border-box; display: flex; align-items: center; justify-content: center; flex: none; }
.thumb-g { width: 7px; height: 4px; background: repeating-linear-gradient(90deg, #555 0 1px, transparent 1px 2px); }
.sr { width: 0; height: 0; margin-left: 5px; margin-right: 3px; border: 3px solid transparent; border-left: 4px solid #555; border-right: 0; flex: none; }
.esep { width: 1px; height: 10px; background: #888; margin: 0 1px 0 2px; flex: none; }
.eitem { width: 11.500px; display: flex; align-items: center; justify-content: center; flex: none; }
.etxt { font: bold 10px "Liberation Sans", sans-serif; color: #222; }

.bottom { height: 19px; flex: none; display: flex; align-items: center; position: relative; }
.bottom .grip { margin-left: 2px; margin-right: 2px; }
.lc { height: 13px; background: #fff; display: flex; align-items: center; flex: none; }
.lc1 { width: 86px; }
.lc2 { width: 66px; margin-left: 4px; }
.lcline { height: 1px; background: #111; margin-left: 10px; flex: 1; margin-right: 10px; }
.bsepv { width: 1px; height: 15px; background: #c0c0c0; margin-left: 10px; margin-right: 5px; flex: none; border-right: 1px solid #fff; }
.colors { display: grid; grid-template-columns: repeat(8, 6px); grid-auto-rows: 6px; gap: 1px; flex: none; }
.sw { display: block; }
.arrow.tiny { margin-left: 1px; border-width: 2px; border-top-width: 3px; margin-right: 0; }
.b2 { margin-left: 9px; margin-right: 6px; }
.chr { width: 11px; height: 11px; flex: none; }
.c1 { margin-left: 0; }
.c2 { margin-left: 5px; }
.doc { width: 11px; height: 11px; flex: none; margin-left: 6px; }
.d2 { margin-left: 5px; }
.b3 { margin-left: 7px; margin-right: 9px; }
.eze { width: 41px; height: 13px; box-sizing: border-box; background: #f4f4f4; border: 1px solid #aaa; border-top: 2px solid #888; border-left: 2px solid #888; line-height: 10px; flex: none; color: #222; }
.nw.eze-t { transform: scaleX(.72); }
.dd { height: 14px; background: linear-gradient(#fafafa, #d4d4d4); border: 1px solid #909090; border-radius: 2px; display: flex; align-items: center; flex: none; box-sizing: border-box; }
.dd1 { width: 53px; margin-left: 5px; }
.dd2 { width: 100px; margin-left: 4px; padding-left: 2px; color: #222; }
.dd-t { width: 75px; }
.trade { width: 43px; height: 14px; margin-left: 5px; border: 1px solid #b4b4b4; background: #efefef; color: #8c8c8c; text-align: center; line-height: 12px; box-sizing: border-box; flex: none; }
.nw.trade-t { transform-origin: center; }
.b4 { margin-left: 8px; }

.status { height: 14px; flex: none; display: flex; align-items: center; box-sizing: border-box; border-top: 2px solid #c8c8c8; background: #f0f0f0; }
.st-main { width: 1113px; padding-left: 2px; box-sizing: border-box; }
.st-cell { height: 100%; border-left: 1px solid #d4d4d4; box-sizing: border-box; display: flex; align-items: center; justify-content: center; flex: none; }
.c-a { width: 36px; }
.c-a2 { width: 48px; }
.c-a3 { width: 16px; }
.c-b { width: 27px; }
.c-c { width: 15px; color: #128a2a; font: bold 10px "Liberation Sans", sans-serif; }
.c-d { width: 25px; }

.taskbar {
  height: 26px; flex: none; display: flex; align-items: center; position: relative;
  background: linear-gradient(#1d5484, #2b6a9c 55%, #3a7aa8); border-top: 1px solid #16456e; box-sizing: border-box;
}
.orb { width: 26px; height: 26px; margin-left: 6px; flex: none; }
.gadget { width: 22px; height: 22px; margin-left: 16px; margin-right: 11px; flex: none; }
.tb { width: 105px; height: 25px; box-sizing: border-box; flex: none; margin-right: 3px; display: flex; align-items: center; border-radius: 2px; border: 1px solid rgba(190,225,245,.55); background: linear-gradient(rgba(255,255,255,.28), rgba(255,255,255,.1)); }
.tb3 { background: linear-gradient(rgba(255,255,255,.5), rgba(255,255,255,.25)); }
.tb-ic { width: 20px; height: 20px; margin-left: 8px; margin-right: 3px; flex: none; }
.tb-ms { width: 22px; height: 22px; margin-left: 5px; margin-right: 3px; flex: none; }
.tb-t { color: #f2f8fc; font-size: 10px; }
.tray { margin-left: auto; display: flex; align-items: center; height: 100%; }
.tr-ic { width: 13px; height: 13px; margin-right: 3px; flex: none; }
.up { width: 8px; height: 8px; margin-right: 5px; }
.clock { display: flex; flex-direction: column; align-items: center; width: 46px; margin-left: 4px; margin-right: 6px; color: #eef6fb; line-height: 12px; }
.clock-t { display: block; white-space: nowrap; transform: scaleX(.78); }
.desk { width: 8px; height: 25px; background: linear-gradient(rgba(255,255,255,.35), rgba(255,255,255,.15)); border-left: 1px solid rgba(255,255,255,.4); box-sizing: border-box; }
.defs { position: absolute; }
</style>
